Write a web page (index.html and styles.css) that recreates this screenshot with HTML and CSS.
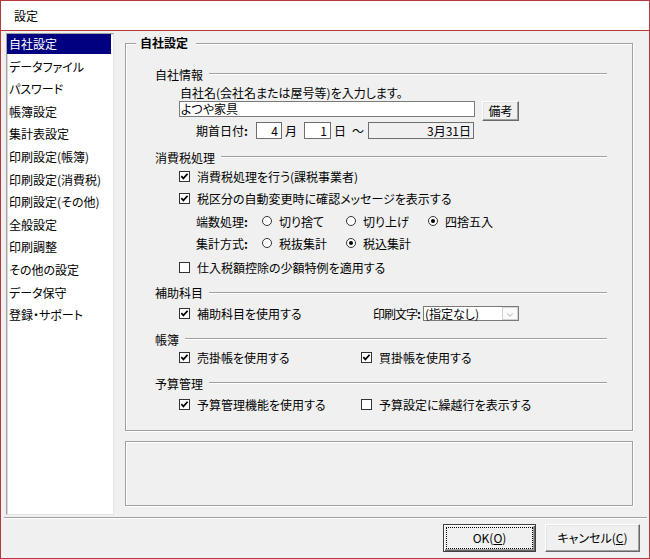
FILE: index.html
```html
<!DOCTYPE html>
<html lang="ja">
<head>
<meta charset="utf-8">
<title>設定</title>
<link rel="stylesheet" href="styles.css">
</head>
<body>
<div class="window">
  <div class="titlebar">設定</div>
  <div class="client">
    <div class="main">
      <ul class="nav">
        <li class="nav-item is-selected">自社設定</li>
        <li class="nav-item">データファイル</li>
        <li class="nav-item">パスワード</li>
        <li class="nav-item">帳簿設定</li>
        <li class="nav-item">集計表設定</li>
        <li class="nav-item">印刷設定(帳簿)</li>
        <li class="nav-item">印刷設定(消費税)</li>
        <li class="nav-item">印刷設定(その他)</li>
        <li class="nav-item">全般設定</li>
        <li class="nav-item">印刷調整</li>
        <li class="nav-item">その他の設定</li>
        <li class="nav-item">データ保守</li>
        <li class="nav-item">登録・サポート</li>
      </ul>
      <div class="pane">
        <div class="group">
          <div class="group-legend">自社設定</div>

          <div class="section-head head-first"><span>自社情報</span><i class="rule"></i></div>
          <div class="row row-label">自社名(会社名または屋号等)を入力します。</div>
          <div class="row row-name">
            <div class="textbox name-box">よつや家具</div>
            <button class="btn btn-note">備考</button>
          </div>
          <div class="row row-date">
            <span class="field-label date-label">期首日付<b class="colon">:</b></span>
            <span class="datebox month-box">4</span>
            <span class="unit">月</span>
            <span class="datebox day-box">1</span>
            <span class="unit">日</span>
            <span class="tilde">～</span>
            <span class="datebox end-box">3月31日</span>
          </div>

          <div class="section-head head-gap"><span>消費税処理</span><i class="rule"></i></div>
          <div class="row row-cb1 indent">
            <span class="check"><span class="cb"><svg viewBox="0 0 9 9" width="9" height="9"><path d="M1.3 4.2 L3.4 6.4 L7.6 1.8" fill="none" stroke="#000" stroke-width="1.7"/></svg></span>消費税処理を行う(課税事業者)</span>
          </div>
          <div class="row row-cb2 indent">
            <span class="check"><span class="cb"><svg viewBox="0 0 9 9" width="9" height="9"><path d="M1.3 4.2 L3.4 6.4 L7.6 1.8" fill="none" stroke="#000" stroke-width="1.7"/></svg></span>税区分の自動変更時に確認メッセージを表示する</span>
          </div>
          <div class="row row-radio indent-label">
            <span class="field-label radio-label">端数処理<b class="colon">:</b></span>
            <span class="opt opt-1"><span class="rb"></span>切り捨て</span>
            <span class="opt opt-2"><span class="rb"></span>切り上げ</span>
            <span class="opt"><span class="rb is-on"></span>四捨五入</span>
          </div>
          <div class="row row-radio indent-label">
            <span class="field-label radio-label">集計方式<b class="colon">:</b></span>
            <span class="opt opt-1"><span class="rb"></span>税抜集計</span>
            <span class="opt"><span class="rb is-on"></span>税込集計</span>
          </div>
          <div class="row row-cb3 indent">
            <span class="check"><span class="cb"></span>仕入税額控除の少額特例を適用する</span>
          </div>

          <div class="section-head head-sub"><span>補助科目</span><i class="rule"></i></div>
          <div class="row row-sub indent">
            <span class="check col-wide"><span class="cb"><svg viewBox="0 0 9 9" width="9" height="9"><path d="M1.3 4.2 L3.4 6.4 L7.6 1.8" fill="none" stroke="#000" stroke-width="1.7"/></svg></span>補助科目を使用する</span>
            <span class="field-label print-label">印刷文字<b class="colon">:</b></span>
            <span class="select">
              <span class="select-text">(指定なし)</span>
              <span class="select-btn"><svg viewBox="0 0 15 13" width="15" height="13"><path d="M4.5 6.5 L7.5 9.5 L10.5 6.5" fill="none" stroke="#a8a8a8" stroke-width="1"/></svg></span>
            </span>
          </div>

          <div class="section-head head-gap2"><span>帳簿</span><i class="rule"></i></div>
          <div class="row row-ledger indent">
            <span class="check col-a"><span class="cb"><svg viewBox="0 0 9 9" width="9" height="9"><path d="M1.3 4.2 L3.4 6.4 L7.6 1.8" fill="none" stroke="#000" stroke-width="1.7"/></svg></span>売掛帳を使用する</span>
            <span class="check"><span class="cb"><svg viewBox="0 0 9 9" width="9" height="9"><path d="M1.3 4.2 L3.4 6.4 L7.6 1.8" fill="none" stroke="#000" stroke-width="1.7"/></svg></span>買掛帳を使用する</span>
          </div>

          <div class="section-head head-gap2"><span>予算管理</span><i class="rule"></i></div>
          <div class="row row-budget indent">
            <span class="check col-a"><span class="cb"><svg viewBox="0 0 9 9" width="9" height="9"><path d="M1.3 4.2 L3.4 6.4 L7.6 1.8" fill="none" stroke="#000" stroke-width="1.7"/></svg></span>予算管理機能を使用する</span>
            <span class="check"><span class="cb"></span>予算設定に繰越行を表示する</span>
          </div>
        </div>
        <div class="memo"></div>
      </div>
    </div>
    <div class="separator"></div>
    <div class="footer">
      <button class="btn btn-dialog btn-default"><span class="focus-ring">OK(<u>O</u>)</span></button>
      <button class="btn btn-dialog">キャンセル(<u>C</u>)</button>
    </div>
  </div>
</div>
</body>
</html>
```

FILE: styles.css
```css
* { box-sizing: border-box; }
html, body { margin: 0; padding: 0; }
body {
  width: 650px;
  height: 559px;
  overflow: hidden;
  background: #fff;
  color: #000;
  font-family: "Noto Sans CJK JP", "Noto Sans", sans-serif;
  font-size: 12px;
  font-feature-settings: "palt" 1;
}
.window {
  width: 650px;
  height: 559px;
  border: 1px solid #b23a3a;
  display: flex;
  flex-direction: column;
}
.titlebar {
  flex: none;
  height: 30px;
  background: #fff;
  border-bottom: 1px solid #b23a3a;
  padding-left: 13px;
  line-height: 29px;
}
.client {
  flex: 1;
  background: #f0f0f0;
  display: flex;
  flex-direction: column;
}
.main {
  display: flex;
  padding: 2px 0 0 5px;
}
.nav {
  width: 108px;
  height: 482px;
  margin: 0;
  padding: 0 2px 0 0;
  list-style: none;
  background: #fff;
  border: 1px solid;
  border-color: #a0a0a0 #e3e3e3 #e3e3e3 #a0a0a0;
  box-shadow: inset 1px 1px 0 #d8d8d8;
}
.nav-item {
  height: 20px;
  margin-bottom: 2.6px;
  line-height: 19px;
  padding-left: 2px;
  white-space: nowrap;
}
.nav-item.is-selected {
  background: #000080;
  color: #fff;
}
.pane {
  margin-left: 11px;
  width: 509px;
  padding-top: 10px;
}
.group {
  position: relative;
  width: 508px;
  height: 388px;
  border: 1px solid #a0a0a0;
  box-shadow: inset 1px 1px 0 #fff, 1px 1px 0 #fff;
  padding: 21px 25px 0 29px;
}
.group-legend {
  position: absolute;
  top: -8px;
  left: 10px;
  padding: 0 8px 0 4px;
  background: #f0f0f0;
  font-weight: bold;
  line-height: 14px;
}
.section-head {
  display: flex;
  align-items: center;
  height: 18px;
  white-space: nowrap;
}
.section-head .rule {
  flex: 1;
  margin-left: 6px;
  height: 2px;
  border-top: 1px solid #a0a0a0;
  border-bottom: 1px solid #fff;
}
.head-gap { margin-top: 9px; }
.head-sub { height: 25px; }
.head-gap2 { margin-top: 8px; }

.row {
  display: flex;
  align-items: center;
  white-space: nowrap;
}
.indent { padding-left: 24px; }
.indent-label { padding-left: 41px; }

.row-label { height: 17px; margin-top: 1px; padding-left: 25px; }
.row-name { height: 21px; align-items: flex-start; padding-left: 24px; }
.row-date { height: 17px; padding-left: 41px; }
.row-cb1 { height: 20px; }
.row-cb2 { height: 24px; }
.row-radio { height: 22px; }
.row-cb3 { height: 26px; }
.row-sub { height: 17px; }
.row-ledger { height: 18px; }
.row-budget { height: 24px; }

.textbox {
  background: #fff;
  border: 1px solid #7a7a7a;
}
.name-box {
  width: 296px;
  height: 16px;
  line-height: 14px;
  padding-left: 1px;
}
.field-label { display: inline-block; }
.colon { font-weight: bold; }
.date-label { width: 60px; }
.radio-label { width: 66px; }
.print-label {
  flex: none;
  letter-spacing: -1px;
  margin-right: 3px;
}

.datebox {
  display: inline-block;
  height: 17px;
  line-height: 15px;
  border: 1px solid #6e6e6e;
  background: #fff;
  text-align: right;
  padding-right: 3px;
}
.month-box { width: 26px; }
.day-box { width: 27px; margin-left: 7px; }
.end-box { width: 106px; margin-left: 4px; background: #f0f0f0; padding-right: 2px; }
.unit { display: inline-block; width: 12px; margin-left: 3px; }
.tilde { display: inline-block; width: 12px; margin-left: 6px; }

.check {
  display: inline-flex;
  align-items: center;
}
.cb {
  display: inline-flex;
  align-items: center;
  justify-content: center;
  width: 11px;
  height: 11px;
  margin-right: 7px;
  border: 1px solid #333;
  background: #fff;
  flex: none;
}
.cb svg { display: block; }
.col-wide { width: 194px; flex: none; }
.col-a { width: 182px; }

.opt {
  display: inline-flex;
  align-items: center;
}
.opt-1 { width: 84px; }
.opt-2 { width: 82px; }
.rb {
  position: relative;
  display: inline-block;
  width: 10px;
  height: 10px;
  margin-right: 7px;
  border: 1px solid #333;
  border-radius: 50%;
  background: #fff;
  flex: none;
}
.rb.is-on::after {
  content: "";
  position: absolute;
  left: 2px;
  top: 2px;
  width: 4px;
  height: 4px;
  border-radius: 50%;
  background: #000;
}

.select {
  display: inline-flex;
  flex: none;
  width: 96px;
  height: 15px;
  border: 1px solid #7a7a7a;
  background: #fff;
}
.select-text {
  flex: 1;
  line-height: 13px;
  padding-left: 1px;
}
.select-btn {
  width: 16px;
  height: 13px;
  border: 1px solid #d4d4d4;
  background: #fafafa;
  display: flex;
  align-items: center;
  justify-content: center;
}
.select-btn svg { display: block; }

.memo {
  margin-top: 10px;
  width: 508px;
  height: 65px;
  border: 1px solid #a0a0a0;
  box-shadow: inset 1px 1px 0 #fff, 1px 1px 0 #fff;
}

.separator {
  margin: 2px 2px 0 3px;
  height: 2px;
  border-top: 1px solid #a0a0a0;
  border-bottom: 1px solid #fff;
}
.footer {
  display: flex;
  justify-content: flex-end;
  gap: 9px;
  padding: 5px 9px 0 0;
}

.btn {
  font: inherit;
  font-feature-settings: "palt" 1;
  color: #000;
  background: #f0f0f0;
  padding: 0;
  border: 1px solid;
  border-color: #fff #696969 #696969 #fff;
  box-shadow: inset -1px -1px 0 #a0a0a0, inset 1px 1px 0 #e3e3e3;
  line-height: 16px;
}
.btn u { text-underline-offset: 1px; }
.btn-note {
  width: 37px;
  height: 20px;
  margin-left: 7px;
}
.btn-dialog {
  width: 95px;
  height: 28px;
  display: flex;
  align-items: center;
  justify-content: center;
}
.btn-default {
  width: 93px;
  border-color: #404040;
  box-shadow: inset 1px 1px 0 #fff, inset -1px -1px 0 #696969, inset -2px -2px 0 #a0a0a0;
  padding: 2px;
}
.focus-ring {
  display: flex;
  align-items: center;
  justify-content: center;
  width: 100%;
  height: 100%;
  border: 1px dotted #000;
}
```
